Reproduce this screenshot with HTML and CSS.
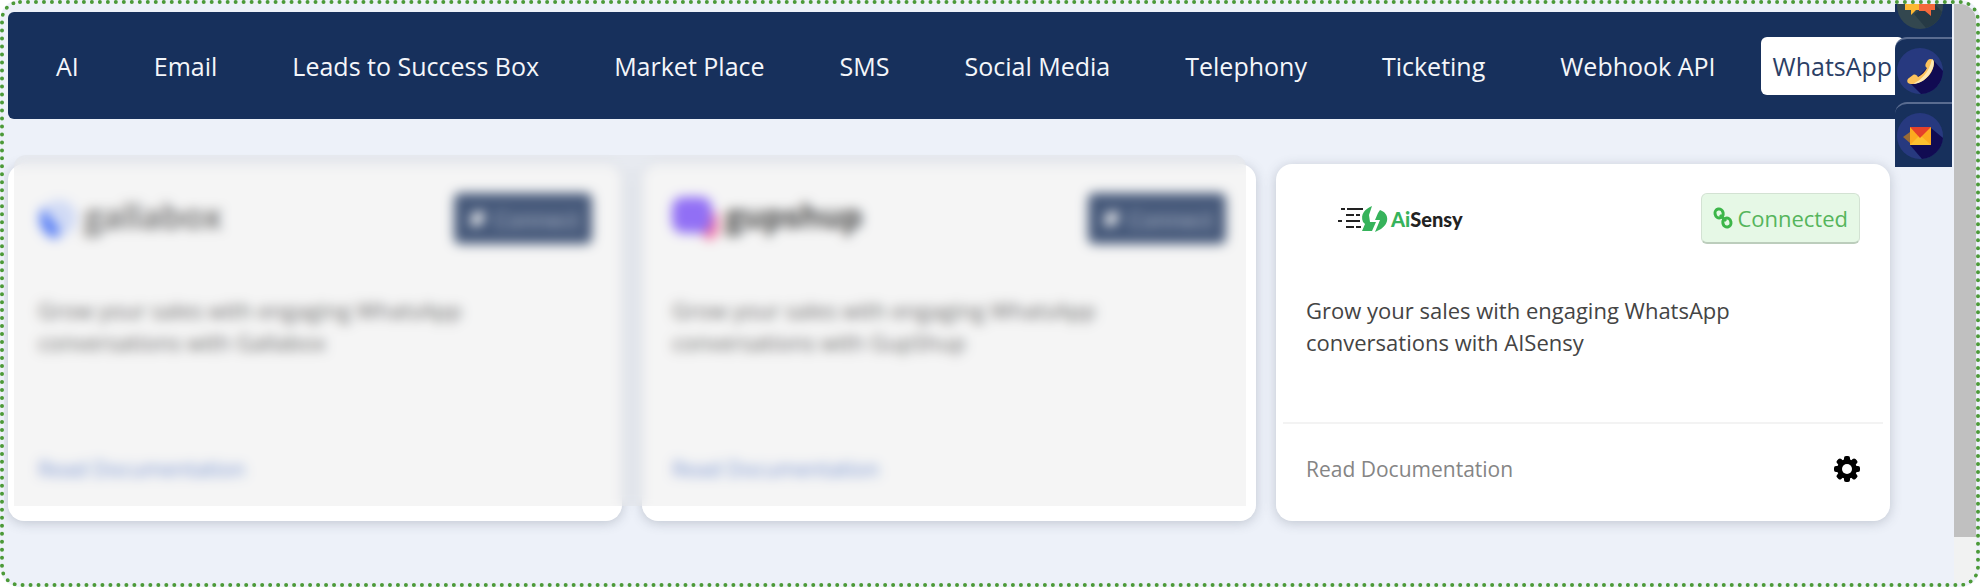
FILE: index.html
```html
<!DOCTYPE html>
<html lang="en">
<head>
  <meta charset="UTF-8" />
  <meta name="viewport" content="width=device-width, initial-scale=1.0"/>
  <title>Integrations</title>
  <link rel="stylesheet" href="styles.css">
</head>
<body>
  <div class="frame">
    <div class="content">
      <nav class="tabs">
        <a href="#ai">AI</a>
        <a href="#email">Email</a>
        <a href="#leads">Leads to Success Box</a>
        <a href="#market">Market Place</a>
        <a href="#sms">SMS</a>
        <a href="#social">Social Media</a>
        <a href="#telephony">Telephony</a>
        <a href="#ticketing">Ticketing</a>
        <a href="#webhook">Webhook API</a>
        <a href="#whatsapp" class="active">WhatsApp</a>
      </nav>

      <main class="cards">
        <section class="card card-first">
          <div class="card-header">
            <div class="logo logo-gallabox">
              <svg width="40" height="44" viewBox="0 0 40 44">
                <circle cx="21" cy="21" r="18" fill="#cfdcff"/>
                <path d="M5 10C-3 22 3 38 18 42C24 38 20 28 15 24C10 20 8 15 5 10Z" fill="#2f62ff"/>
              </svg>
              <span>gallabox</span>
            </div>
            <button type="button" class="btn btn-connect">
              <svg width="20" height="20" viewBox="0 0 20 20"><path d="M3 9L11 2L18 5L15 14L6 18Z" fill="#fff"/></svg>
              Connect
            </button>
          </div>
          <p class="description">Grow your sales with engaging WhatsApp conversations with Gallabox</p>
          <div class="card-footer">
            <a href="#gallabox-docs" class="link-blue">Read Documentation</a>
          </div>
        </section>

        <section class="card card-second">
          <div class="card-header">
            <div class="logo logo-gupshup">
              <svg width="48" height="48" viewBox="0 0 48 48">
                <path d="M30 18H46V38L38 46L26 36Z" fill="#ff4f8b"/>
                <rect x="0" y="2" width="40" height="36" rx="11" fill="#7a4dff"/>
              </svg>
              <span>gupshup</span>
            </div>
            <button type="button" class="btn btn-connect">
              <svg width="20" height="20" viewBox="0 0 20 20"><path d="M3 9L11 2L18 5L15 14L6 18Z" fill="#fff"/></svg>
              Connect
            </button>
          </div>
          <p class="description">Grow your sales with engaging WhatsApp conversations with GupShup</p>
          <div class="card-footer">
            <a href="#gupshup-docs" class="link-blue">Read Documentation</a>
          </div>
        </section>

        <section class="card card-third">
          <div class="card-header">
            <div class="logo logo-aisensy">
              <svg width="52" height="28" viewBox="0 0 52 28">
                <g fill="#222">
                  <rect x="3" y="3" width="4" height="2"/>
                  <rect x="9" y="3" width="16" height="2"/>
                  <rect x="8" y="9" width="8" height="2"/>
                  <rect x="18" y="9" width="4" height="2"/>
                  <rect x="0" y="15" width="4" height="2"/>
                  <rect x="8" y="15" width="14" height="2"/>
                  <rect x="8" y="21" width="8" height="2"/>
                  <rect x="18" y="21" width="5" height="2"/>
                </g>
                <path d="M34 1C27 4 22 9 25 17L27 19L24 26H34L38 17H32L31 10Z" fill="#36b35b"/>
                <path d="M42 5C51 8 52 18 43 24L37 27L42 15H37L40 8Z" fill="#36b35b"/>
              </svg>
              <span><b>Ai</b>Sensy</span>
            </div>
            <button type="button" class="btn btn-connected">
              <svg width="20" height="24" viewBox="1 0 20 24" fill="none" stroke="#3cb649" stroke-width="3">
                <rect x="3" y="3" width="8" height="9" rx="4" transform="rotate(-12 7 7)"/>
                <rect x="11" y="12" width="8" height="9" rx="4" transform="rotate(-12 15 17)"/>
                <path d="M8 9L14 15"/>
              </svg>
              Connected
            </button>
          </div>
          <p class="description">Grow your sales with engaging WhatsApp conversations with AISensy</p>
          <div class="card-footer">
            <a href="#aisensy-docs">Read Documentation</a>
            <button type="button" class="settings" aria-label="Settings">
              <svg width="26" height="26" viewBox="-13 -13 26 26">
                <g fill="#000">
                  <circle r="10"/>
                  <rect x="-3" y="-13" width="6" height="26" rx="2"/>
                  <rect x="-3" y="-13" width="6" height="26" rx="2" transform="rotate(45)"/>
                  <rect x="-3" y="-13" width="6" height="26" rx="2" transform="rotate(90)"/>
                  <rect x="-3" y="-13" width="6" height="26" rx="2" transform="rotate(135)"/>
                </g>
                <circle r="5" fill="#fff"/>
              </svg>
            </button>
          </div>
        </section>

        <div class="locked"></div>
      </main>
    </div>

    <div class="scroll-track">
      <div class="scroll-thumb"></div>
    </div>

    <!-- floating contact shortcuts -->
    <div class="shortcuts">
      <a href="#chat" aria-label="Chat">
        <svg width="48" height="48" viewBox="0 0 48 48">
          <circle cx="24" cy="24" r="23" fill="#33474f"/>
          <path d="M18 32L30 46A23 23 0 0 0 46 30L37 20Z" fill="#263a45"/>
          <path d="M9 12H26V28H20L15 33V28H9Z" fill="#fdb833"/>
          <path d="M23 14H39V28H35V34L29 29H23Z" fill="#f4693b"/>
        </svg>
      </a>
      <a href="#call" aria-label="Call">
        <svg width="48" height="48" viewBox="0 0 48 48">
          <circle cx="24" cy="24" r="23" fill="#27397f"/>
          <path d="M38 14L47 24A23 23 0 0 1 25 47L13 35L24 28Z" fill="#110b52"/>
          <path d="M32 13C34 11 38 12 38 15C38 27 27 37 15 37C11 37 10 33 13 31L17 28C19 27 21 28 22 30C26 28 29 25 31 21C29 20 29 18 30 16Z" fill="#fcc25c"/>
          <path d="M36 12C39 14 38 20 35 25C31 32 24 37 17 37C25 33 33 26 36 12Z" fill="#fde9b5"/>
        </svg>
      </a>
      <a href="#mail" aria-label="Mail">
        <svg width="48" height="48" viewBox="0 0 48 48">
          <circle cx="24" cy="24" r="23" fill="#27397f"/>
          <path d="M35 16L47 26A23 23 0 0 1 26 47L14 33Z" fill="#110b52"/>
          <path d="M7 25L14 20V31Z" fill="#9a6a35"/>
          <rect x="14" y="15" width="21" height="18" fill="#fca91f"/>
          <path d="M14 33L24 23L35 33Z" fill="#fdc02f"/>
          <path d="M14 15H35L24 26Z" fill="#e5402a"/>
        </svg>
      </a>
    </div>
  </div>
</body>
</html>
```
FILE: styles.css
```css
* {
  margin: 0;
  padding: 0;
  box-sizing: border-box;
  font-family: 'Open Sans', 'Noto Sans', sans-serif;
}

body {
  background-color: #fff;
  color: #444;
}

a {
  text-decoration: none;
}

svg {
  display: block;
  flex-shrink: 0;
}

.frame {
  position: relative;
  display: flex;
  min-height: 100vh;
  background-color: #edf1f9;
  border: 4px dotted #4c9a38;
  border-radius: 20px;
  overflow: hidden;
}

.content {
  flex: 1;
  min-width: 0;
  padding: 8px 3px 0 4px;
}

.tabs {
  display: flex;
  align-items: center;
  gap: 15px;
  padding: 25px 18px 24px;
  background-color: #17305c;
  border-radius: 6px;
  overflow: hidden;
}

.tabs a {
  flex-shrink: 0;
  padding: 0 30px;
  border-radius: 6px;
  color: #f4f6fa;
  font-size: 25px;
  line-height: 58px;
  white-space: nowrap;
}

.tabs .active {
  padding: 0 12px;
  background-color: #fff;
  color: #2c3f66;
}

.cards {
  display: grid;
  grid-template-columns: repeat(3, 1fr);
  gap: 20px;
  margin: 45px 61px 0 0;
}

.card {
  grid-row: 1;
  display: flex;
  flex-direction: column;
  min-width: 0;
  background-color: #fff;
  border-radius: 16px;
  box-shadow: 0 2px 12px rgba(60, 70, 90, 0.25);
}

.card-first {
  grid-column: 1;
}

.card-second {
  grid-column: 2;
}

.card-third {
  grid-column: 3;
}

.card-header {
  display: flex;
  align-items: center;
  justify-content: space-between;
  padding: 29px 30px 0;
}

.logo {
  display: flex;
  align-items: center;
}

.logo-gallabox {
  gap: 6px;
  color: #444;
  font-size: 34px;
  font-weight: 600;
  line-height: 40px;
}

.logo-gupshup {
  gap: 5px;
  color: #111;
  font-size: 32px;
  font-weight: 700;
  line-height: 40px;
}

.logo span {
  padding-bottom: 6px;
}

.logo-aisensy {
  gap: 1px;
  padding-left: 32px;
}

.logo-aisensy span {
  padding-bottom: 0;
  color: #222;
  font-family: Lato, sans-serif;
  font-size: 20px;
  font-weight: 900;
}

.logo-aisensy b {
  color: #36b35b;
  font-family: inherit;
  font-weight: 900;
}

.btn {
  display: flex;
  align-items: center;
  height: 51px;
  border-radius: 6px;
  font-size: 22px;
  cursor: pointer;
}

.btn-connect {
  gap: 7px;
  padding: 0 13px;
  border: none;
  background-color: #17305c;
  color: #aab6cc;
}

.btn-connected {
  gap: 4px;
  padding: 0 11px;
  border: 1px solid #d3e2d3;
  border-bottom: 2px solid #bccdbc;
  background-color: #e6f8e6;
  color: #55b55c;
}

.description {
  max-width: 520px;
  padding: 50px 30px 64px;
  font-size: 22px;
  line-height: 32px;
}

.card-footer {
  display: flex;
  align-items: center;
  justify-content: space-between;
  height: 99px;
  margin: 0 7px;
  padding: 0 23px 7px;
  border-top: 2px solid #fff;
}

.card-third .card-footer {
  border-top-color: #f3f3f3;
}

.card-footer a {
  color: #858585;
  font-size: 21px;
}

.card-footer .link-blue {
  color: #5b7fd0;
}

.settings {
  border: none;
  background: none;
  cursor: pointer;
}

/* frosted cover over the two unavailable cards */
.locked {
  grid-row: 1;
  grid-column: 1 / 3;
  z-index: 1;
  margin: -9px 10px 15px 6px;
  background-color: rgba(215, 215, 215, 0.25);
  border-radius: 12px 12px 0 0;
  backdrop-filter: blur(6px);
}

.scroll-track {
  width: 22px;
  background-color: #f1f2f2;
}

.scroll-thumb {
  height: 533px;
  background-color: #c0c0c0;
}

.shortcuts {
  position: absolute;
  z-index: 2;
  top: -32px;
  right: 24px;
  width: 57px;
}

.shortcuts a {
  display: flex;
  align-items: center;
  height: 65px;
  padding-left: 1px;
  background-color: #17305c;
  border-top: 2px solid #5a6c90;
  border-top-left-radius: 12px;
}
```
